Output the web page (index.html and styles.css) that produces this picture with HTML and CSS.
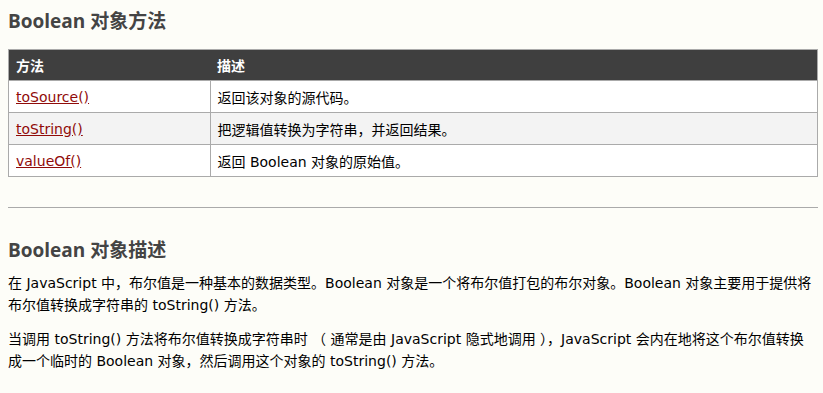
FILE: index.html
```html
<!DOCTYPE html>
<html lang="zh-CN">
<head>
<meta charset="utf-8">
<title>Boolean 对象</title>
<link rel="stylesheet" href="styles.css">
</head>
<body>
<div class="article">
  <h2 class="section-title">Boolean 对象方法</h2>
  <table class="reference">
    <thead>
      <tr><th class="col-method">方法</th><th>描述</th></tr>
    </thead>
    <tbody>
      <tr><td><a href="#">toSource()</a></td><td>返回该对象的源代码。</td></tr>
      <tr><td><a href="#">toString()</a></td><td>把逻辑值转换为字符串，并返回结果。</td></tr>
      <tr><td><a href="#">valueOf()</a></td><td>返回 Boolean 对象的原始值。</td></tr>
    </tbody>
  </table>
  <hr class="divider">
  <h2 class="section-title second">Boolean 对象描述</h2>
  <p>在 JavaScript 中，布尔值是一种基本的数据类型。Boolean 对象是一个将布尔值打包的布尔对象。Boolean 对象主要用于提供将布尔值转换成字符串的 toString() 方法。</p>
  <p>当调用 toString() 方法将布尔值转换成字符串时 （ 通常是由 JavaScript 隐式地调用 ），JavaScript 会内在地将这个布尔值转换成一个临时的 Boolean 对象，然后调用这个对象的 toString() 方法。</p>
</div>
</body>
</html>
```
FILE: styles.css
```css
html, body {
  margin: 0;
  padding: 0;
  background: #fdfdf8;
}

body {
  font-family: "DejaVu Sans", Verdana, "Noto Sans CJK SC", sans-serif;
  font-size: 14px;
  color: #000;
}

.article {
  padding: 0 5px 0 8px;
}

.section-title {
  margin: 0;
  padding: 9px 0 0;
  height: 49px;
  box-sizing: border-box;
  font-family: "Open Sans", "Noto Sans CJK SC", sans-serif;
  font-size: 19px;
  font-weight: bold;
  color: #444;
  line-height: 24px;
}

.section-title.second {
  height: 64px;
  padding-top: 30px;
}

.reference {
  width: 100%;
  border-collapse: collapse;
  border: 1px solid #aaa;
  background: #fff;
}

.reference th {
  background: #3f3f3f;
  color: #fff;
  text-align: left;
  font-weight: bold;
  height: 30px;
  padding: 0 7px;
  border: none;
}

.reference .col-method {
  width: 187px;
}

.reference td {
  height: 31px;
  padding: 0 7px;
  border: 1px solid #aaa;
}

.reference tbody tr:nth-child(even) td {
  background: #f3f3f3;
}

.reference a {
  color: #900b09;
  text-decoration: underline;
}

.divider {
  margin: 30px 0 0;
  border: none;
  border-top: 1px solid #aaa;
  height: 0;
}

p {
  margin: 0 4px 12px 0;
  line-height: 22px;
}
```
